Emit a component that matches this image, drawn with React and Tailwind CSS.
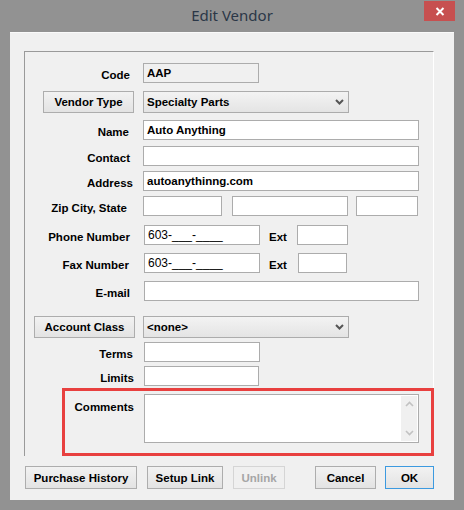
import { useState } from 'react';

const FONT = { fontFamily: '"Liberation Sans", Arial, sans-serif' };

function Label({ w, children }) {
  return (
    <div className={`shrink-0 pt-[3px] leading-[14px] text-right font-bold text-[11.5px] text-black ${w}`}>{children}</div>
  );
}

function Field({ w, ml, value = '', bold = true, disabled = false }) {
  return (
    <div
      className={`h-[20px] shrink-0 border border-[#acacac] flex items-center pl-[3px] leading-[14px] text-[11.5px] text-black overflow-hidden whitespace-nowrap ${
        disabled ? 'bg-[#f0f0f0]' : 'bg-white'
      } ${bold ? 'font-bold' : 'font-normal text-[12px]'} ${w} ${ml}`}
    >
      {value}
    </div>
  );
}

function Chevron({ className = '' }) {
  return (
    <svg width="9" height="6" viewBox="0 0 9 6" className={className}>
      <path d="M1 1 L4.5 4.5 L8 1" stroke="#555" strokeWidth="2" fill="none" />
    </svg>
  );
}

function Select({ value, ml }) {
  return (
    <div
      className={`h-[22px] w-[206px] shrink-0 border border-[#acacac] bg-gradient-to-b from-[#f3f3f3] to-[#e4e4e4] flex items-center justify-between pl-[3px] pr-[4px] leading-[14px] font-bold text-[11.5px] text-black ${ml}`}
    >
      <span>{value}</span>
      <Chevron />
    </div>
  );
}

function Btn({ children, w, ml = '', h = 'h-[23px]', variant = 'normal' }) {
  const border =
    variant === 'default'
      ? 'border-[#3c9ae0]'
      : variant === 'disabled'
      ? 'border-[#d5d5d5]'
      : 'border-[#adadad]';
  const text = variant === 'disabled' ? 'text-[#a6a6a6]' : 'text-black';
  const bg =
    variant === 'disabled'
      ? 'bg-[#f0f0f0]'
      : 'bg-gradient-to-b from-[#f2f2f2] to-[#e3e3e3]';
  return (
    <div
      className={`shrink-0 border flex items-center justify-center leading-[14px] font-bold text-[11.5px] ${h} ${border} ${text} ${bg} ${w} ${ml}`}
    >
      {children}
    </div>
  );
}

export default function App() {
  const [values] = useState({
    code: 'AAP',
    type: 'Specialty Parts',
    name: 'Auto Anything',
    address: 'autoanythinng.com',
    phone: '603-___-____',
    fax: '603-___-____',
    accountClass: '<none>',
  });

  return (
    <div className="w-[464px] h-[510px] bg-[#929292] flex flex-col relative" style={FONT}>
      {/* Title bar */}
      <div className="h-[32px] shrink-0 flex items-center justify-center">
        <span
          className="text-[15px] text-[#2b3747] -mt-[1px]"
          style={{ fontFamily: '"Noto Sans", "Open Sans", sans-serif' }}
        >
          Edit Vendor
        </span>
      </div>
      <div className="absolute left-[424px] top-[1px] w-[31px] h-[20px] bg-[#c75050] flex items-center justify-center">
        <svg width="10" height="9" viewBox="0 0 10 9">
          <path d="M1.5 1 L8.5 8 M8.5 1 L1.5 8" stroke="#fff" strokeWidth="2" />
        </svg>
      </div>

      {/* Client area */}
      <div className="mx-[10px] h-[468px] bg-[#f0f0f0] border-t border-[#fafafa] flex flex-col">
        {/* Group panel */}
        <div className="ml-[14px] mt-[18px] w-[410px] h-[405px] shrink-0 border-t border-l border-[#9a9a9a] border-r border-r-white flex flex-col">
          {/* Code */}
          <div className="flex items-center h-[20px] mt-[11px]">
            <Label w="w-[105px]">Code</Label>
            <Field w="w-[116px]" ml="ml-[13px]" value={values.code} disabled />
          </div>
          {/* Vendor Type */}
          <div className="flex items-center h-[22px] mt-[8px]">
            <Btn w="w-[91px]" ml="ml-[18px]" h="h-[22px]">Vendor Type</Btn>
            <Select value={values.type} ml="ml-[9px]" />
          </div>
          {/* Name */}
          <div className="flex items-center h-[20px] mt-[7px]">
            <Label w="w-[104px]">Name</Label>
            <Field w="w-[276px]" ml="ml-[14px]" value={values.name} />
          </div>
          {/* Contact */}
          <div className="flex items-center h-[20px] mt-[6px]">
            <Label w="w-[105px]">Contact</Label>
            <Field w="w-[276px]" ml="ml-[13px]" />
          </div>
          {/* Address */}
          <div className="flex items-center h-[20px] mt-[5px]">
            <Label w="w-[108px]">Address</Label>
            <Field w="w-[276px]" ml="ml-[10px]" value={values.address} />
          </div>
          {/* Zip City State */}
          <div className="flex items-center h-[20px] mt-[5px]">
            <Label w="w-[102px]">Zip City, State</Label>
            <Field w="w-[79px]" ml="ml-[16px]" />
            <Field w="w-[116px]" ml="ml-[10px]" />
            <Field w="w-[62px]" ml="ml-[8px]" />
          </div>
          {/* Phone */}
          <div className="flex items-center h-[20px] mt-[9px]">
            <Label w="w-[105px]">Phone Number</Label>
            <Field w="w-[116px]" ml="ml-[14px]" value={values.phone} bold={false} />
            <span className="ml-[9px] pt-[3px] leading-[14px] font-bold text-[11.5px] text-black">Ext</span>
            <Field w="w-[51px]" ml="ml-[10px]" />
          </div>
          {/* Fax */}
          <div className="flex items-center h-[20px] mt-[8px]">
            <Label w="w-[104px]">Fax Number</Label>
            <Field w="w-[116px]" ml="ml-[15px]" value={values.fax} bold={false} />
            <span className="ml-[9px] pt-[3px] leading-[14px] font-bold text-[11.5px] text-black">Ext</span>
            <Field w="w-[49px]" ml="ml-[11px]" />
          </div>
          {/* E-mail */}
          <div className="flex items-center h-[20px] mt-[8px]">
            <Label w="w-[105px]">E-mail</Label>
            <Field w="w-[275px]" ml="ml-[14px]" />
          </div>
          {/* Account Class */}
          <div className="flex items-center h-[22px] mt-[15px]">
            <Btn w="w-[101px]" ml="ml-[9px]" h="h-[22px]">Account Class</Btn>
            <Select value={values.accountClass} ml="ml-[8px]" />
          </div>
          {/* Terms */}
          <div className="flex items-center h-[20px] mt-[4px]">
            <Label w="w-[108px]">Terms</Label>
            <Field w="w-[116px]" ml="ml-[11px]" />
          </div>
          {/* Limits */}
          <div className="flex items-center h-[20px] mt-[4px]">
            <Label w="w-[109px]">Limits</Label>
            <Field w="w-[115px]" ml="ml-[10px]" />
          </div>
          {/* Comments (highlighted) */}
          <div className="ml-[37px] mt-[2px] w-[372px] h-[68px] shrink-0 border-[3px] border-[#e8403f] flex items-start pt-[3px]">
            <div className="w-[69px] shrink-0 text-right leading-[14px] font-bold text-[11.5px] text-black mt-[6px]">Comments</div>
            <div className="ml-[10px] w-[275px] h-[49px] shrink-0 border border-[#acacac] bg-white flex justify-end p-[1px]">
              <div className="w-[16px] h-full bg-[#f0f0f0] flex flex-col items-center justify-between py-[5px]">
                <svg width="9" height="6" viewBox="0 0 9 6">
                  <path d="M1 5 L4.5 1.5 L8 5" stroke="#c2c2c2" strokeWidth="1.6" fill="none" />
                </svg>
                <svg width="9" height="6" viewBox="0 0 9 6">
                  <path d="M1 1 L4.5 4.5 L8 1" stroke="#c2c2c2" strokeWidth="1.6" fill="none" />
                </svg>
              </div>
            </div>
          </div>
        </div>

        {/* Bottom buttons */}
        <div className="flex items-center mt-[10px] ml-[15px]">
          <Btn w="w-[112px]">Purchase History</Btn>
          <Btn w="w-[76px]" ml="ml-[10px]">Setup Link</Btn>
          <Btn w="w-[52px]" ml="ml-[10px]" variant="disabled">Unlink</Btn>
          <Btn w="w-[61px]" ml="ml-[30px]">Cancel</Btn>
          <Btn w="w-[49px]" ml="ml-[9px]" variant="default">OK</Btn>
        </div>
      </div>
    </div>
  );
}
